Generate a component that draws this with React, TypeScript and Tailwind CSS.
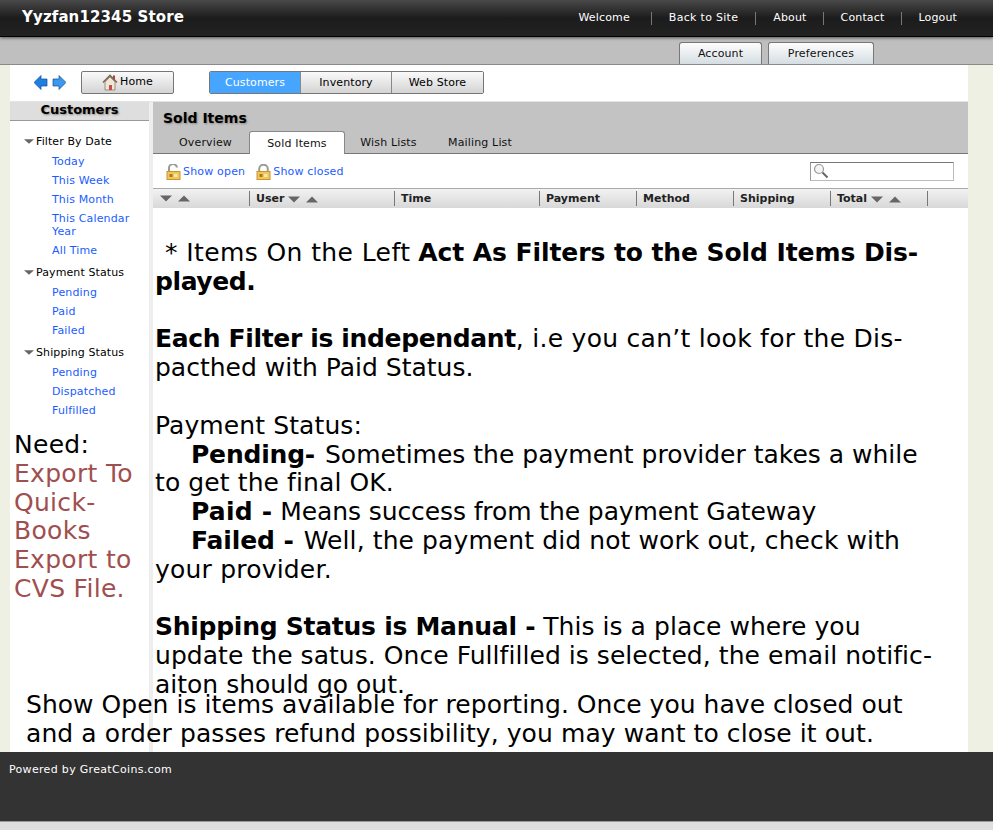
import React from "react";

const font = "font-['DejaVu_Sans',Verdana,sans-serif]";

function Tri({ up, small, className }: { up?: boolean; small?: boolean; className?: string }) {
  return (
    <svg width={small ? 10 : 12} height={small ? 5 : 7} viewBox="0 0 12 7" preserveAspectRatio="none" className={className}>
      <path d={up ? "M6 0.5L12 6.5H0Z" : "M0 0.5H12L6 6.5Z"} fill="#666" />
    </svg>
  );
}

function Lock({ open }: { open?: boolean }) {
  return (
    <svg width="15" height="16" viewBox="0 0 15 16">
      <path d={open ? "M3 8V4.5a4 4 0 0 1 8-1" : "M3.2 8V5a4.3 4.3 0 0 1 8.6 0v3"} fill="none" stroke="#9a9a9a" strokeWidth="2" />
      <rect x="1" y="7.5" width="13" height="8" fill="#f2c65a" stroke="#c9962c" />
      <rect x="3.5" y="10" width="3" height="3" fill="#a87a1c" />
      <rect x="8" y="10" width="3.5" height="3" fill="#fbe9a8" />
    </svg>
  );
}

function Group({ title, links }: { title: string; links: string[] }) {
  return (
    <div className="mb-[4px]">
      <div className="flex items-center h-[19px] pl-[14px] text-[11px] tracking-[0.1px] text-black">
        <Tri small className="mr-[2px] mb-[3px]" />
        <span>{title}</span>
      </div>
      <div className="pl-[42px] text-[11px] leading-[13px] tracking-[0.15px] text-[#1a5cff]">
        {links.map(l => (
          <div key={l} className="py-[3px] pr-2">
            {l}
          </div>
        ))}
      </div>
    </div>
  );
}

const columns = [
  { label: "User", w: "w-[145px]", arrows: true },
  { label: "Time", w: "w-[145px]" },
  { label: "Payment", w: "w-[97px]" },
  { label: "Method", w: "w-[97px]" },
  { label: "Shipping", w: "w-[97px]" },
  { label: "Total", w: "w-[97px]", arrows: true },
];

export default function App() {
  return (
    <div className={`${font} relative w-[993px] h-[830px] overflow-hidden bg-[#eef0e4]`}>
      {/* top bar */}
      <div className="relative z-10 h-[37px] flex items-center justify-between border-b border-black bg-gradient-to-b from-[#4a4a4a] via-[#1c1c1c] to-[#222] text-white shadow-[0_1px_3px_#555]">
        <div className="pl-[22px] pb-[2px] text-[15px] font-bold tracking-[0.12px]">Yyzfan12345 Store</div>
        <div className="flex items-center text-[11px] tracking-[0.15px] pr-[36px]">
          <span>Welcome</span>
          <span className="h-[13px] w-px bg-[#777] ml-[21px] mr-[17px]" />
          <span className="tracking-[0.3px]">Back to Site</span>
          <span className="h-[13px] w-px bg-[#777] mx-[17px]" />
          <span>About</span>
          <span className="h-[13px] w-px bg-[#777] ml-[16px] mr-[17px]" />
          <span>Contact</span>
          <span className="h-[13px] w-px bg-[#777] ml-[17px] mr-[16px]" />
          <span>Logout</span>
        </div>
      </div>

      {/* sub bar */}
      <div className="h-[28px] flex justify-end items-end gap-[6px] pr-[119px] bg-[#bfbfbf] border-b border-[#8a8a8a]">
        <div className="h-[22px] w-[83px] pt-[2px] flex items-center justify-center rounded-t-[3px] border border-b-0 border-[#777] bg-gradient-to-b from-[#fdfdfd] to-[#d5dde2] text-[11px] tracking-[0.1px] text-[#111]">
          Account
        </div>
        <div className="h-[22px] w-[106px] pt-[2px] flex items-center justify-center rounded-t-[3px] border border-b-0 border-[#777] bg-gradient-to-b from-[#fdfdfd] to-[#d5dde2] text-[11px] tracking-[0.15px] text-[#111]">
          Preferences
        </div>
      </div>

      {/* page */}
      <div className="relative ml-[10px] w-[958px] h-[687px] bg-white overflow-hidden">
        {/* toolbar */}
        <div className="h-[37px] flex items-start pt-[6px] pl-[24px] border-b border-[#e4e4e4]">
          <svg width="32" height="15" viewBox="0 0 32 15" className="mt-[4px]">
            <path d="M0 7.5L7 0.5V4H13V11H7V14.5Z" fill="#1f7fe0" stroke="#0b4f9e" strokeWidth="0.7" />
            <path d="M32 7.5L25 0.5V4H19V11H25V14.5Z" fill="#3d97ea" stroke="#0b4f9e" strokeWidth="0.7" />
          </svg>
          <div className="ml-[15px] h-[23px] w-[93px] flex items-center justify-center gap-[2px] rounded-[2px] border border-[#777] bg-gradient-to-b from-[#fafafa] to-[#d4d4d4] text-[11px] tracking-[0.1px] text-black">
            <svg width="16" height="17" viewBox="0 0 16 17">
              <path d="M1 8.5L8 1.5L15 8.5" fill="none" stroke="#7a6a55" strokeWidth="1.6" />
              <path d="M3 8V16H13V8L8 3Z" fill="#efe6d6" stroke="#8a7a66" strokeWidth="0.8" />
              <rect x="11" y="1.5" width="2" height="4" fill="#a5483f" />
              <rect x="7" y="11" width="3" height="5" fill="#c0504d" />
            </svg>
            Home
          </div>
          <div className="ml-[35px] flex h-[23px] text-[11px] tracking-[0.1px] rounded-[2px] border border-[#777] overflow-hidden">
            <div className="w-[90px] pt-px flex items-center justify-center bg-[#45a5ff] text-white">Customers</div>
            <div className="w-[91px] pt-px flex items-center justify-center border-l border-[#888] bg-gradient-to-b from-[#fafafa] to-[#d4d4d4] text-black">
              Inventory
            </div>
            <div className="w-[92px] pt-px flex items-center justify-center border-l border-[#888] bg-gradient-to-b from-[#fafafa] to-[#d4d4d4] text-black">
              Web Store
            </div>
          </div>
        </div>

        <div className="flex h-[650px]">
          {/* sidebar */}
          <div className="w-[139px] shrink-0">
            <div className="h-[19px] bg-[#dedede] border-b border-[#999] text-center text-[13px] font-bold leading-[16px] text-black [text-shadow:1px_1px_2px_#888]">
              Customers
            </div>
            <div className="pt-[12px]">
              <Group title="Filter By Date" links={["Today", "This Week", "This Month", "This Calendar Year", "All Time"]} />
              <Group title="Payment Status" links={["Pending", "Paid", "Failed"]} />
              <Group title="Shipping Status" links={["Pending", "Dispatched", "Fulfilled"]} />
            </div>
            <div className="pl-[4px] pt-[7px] text-[25px] leading-[28.8px] tracking-[0.3px]">
              <div className="text-black">Need:</div>
              <div className="text-[#a04f4f]">
                Export To
                <br />
                Quick-
                <br />
                Books
                <br />
                Export to
                <br />
                CVS File.
              </div>
            </div>
          </div>

          <div className="w-[4px] shrink-0 bg-[#eeeeee]" />

          {/* main column */}
          <div className="flex-1 min-w-0">
            <div className="h-[52px] bg-[#c3c3c3] border-b border-[#777] relative">
              <div className="pl-[10px] pt-[7px] text-[14px] font-bold leading-[18px] text-black [text-shadow:1px_1px_2px_#888]">
                Sold Items
              </div>
              <div className="absolute left-[9px] bottom-[-1px] flex text-[11px] tracking-[0.15px] text-[#111]">
                <div className="w-[87px] h-[22px] pt-[2px] flex items-center justify-center">Overview</div>
                <div className="w-[96px] h-[23px] pt-[2px] flex items-center justify-center rounded-t-[3px] border border-b-0 border-[#888] bg-white">
                  Sold Items
                </div>
                <div className="w-[87px] h-[22px] pt-[2px] flex items-center justify-center">Wish Lists</div>
                <div className="w-[96px] h-[22px] pt-[2px] flex items-center justify-center">Mailing List</div>
              </div>
            </div>

            <div className="h-[34px] flex items-center pt-[2px] pl-[13px] pr-[14px] text-[11px] tracking-[0.18px] text-[#1a5cff]">
              <Lock open />
              <span className="ml-[2px]">Show open</span>
              <span className="ml-[11px]">
                <Lock />
              </span>
              <span className="ml-[2px]">Show closed</span>
              <div className="ml-auto mb-[2px] h-[19px] w-[144px] flex items-center pl-[2px] border border-[#bbb] border-t-[#777] border-l-[#999]">
                <svg width="16" height="16" viewBox="0 0 16 16">
                  <circle cx="6" cy="6" r="4.5" fill="#f4f4f4" stroke="#999" strokeWidth="1.2" />
                  <path d="M9.5 9.5L14.5 14.5" stroke="#666" strokeWidth="2" />
                </svg>
              </div>
            </div>

            <div className="h-[20px] flex items-center border-t border-[#aaa] bg-gradient-to-b from-[#f2f2f2] to-[#d8d8d8] text-[11px] font-bold text-[#222]">
              <div className="w-[96px] h-[15px] flex items-center gap-[6px] pl-[7px]">
                <Tri />
                <Tri up />
              </div>
              {columns.map(c => (
                <div key={c.label} className={`${c.w} h-[15px] pt-px flex items-center gap-[4px] pl-[6px] border-l border-[#777]`}>
                  {c.label}
                  {c.arrows && (
                    <>
                      <Tri />
                      <Tri up className="ml-[2px]" />
                    </>
                  )}
                </div>
              ))}
              <div className="h-[15px] border-l border-[#777]" />
            </div>

            <div className="pl-[2px] pt-[31px] text-[25px] leading-[28.8px] text-black whitespace-nowrap">
              <div className="pl-[2px]">
                &nbsp;<span className="tracking-[0.4px]">* Items On the Left</span>{" "}
                <b className="tracking-[-0.08px]">Act As Filters to the Sold Items Dis-</b>
              </div>
              <div>
                <b className="tracking-[-0.4px]">played.</b>
              </div>
              <div className="mt-[28.8px]">
                <b className="tracking-[-0.35px]">Each Filter is independant</b>
                <span className="tracking-[0.27px]">, i.e you can’t look for the Dis-</span>
              </div>
              <div>pacthed with Paid Status.</div>
              <div className="mt-[28.8px] tracking-[0.1px]">Payment Status:</div>
              <div className="pl-[36px]">
                <b className="tracking-[-0.2px] mr-[2px]">Pending-</b> Sometimes the payment provider takes a while
              </div>
              <div className="tracking-[0.1px]">to get the final OK.</div>
              <div className="pl-[36px]">
                <b className="tracking-[0.2px]">Paid -</b> <span className="tracking-[-0.1px]">Means success from the payment Gateway</span>
              </div>
              <div className="pl-[36px]">
                <b className="tracking-[-0.1px] mr-[2px]">Failed -</b> <span className="tracking-[0.1px]">Well, the payment did not work out, check with</span>
              </div>
              <div className="tracking-[0.2px]">your provider.</div>
              <div className="mt-[28.8px]">
                <b className="tracking-[-0.26px]">Shipping Status is Manual -</b> <span className="tracking-[0.05px]">This is a place where you</span>
              </div>
              <div className="tracking-[0.05px]">update the satus. Once Fullfilled is selected, the email notific-</div>
              <div>aiton should go out.</div>
            </div>
          </div>
        </div>

        {/* note pasted over the page */}
        <div className="absolute left-[16px] top-[626px] text-[25px] leading-[28.8px] text-black whitespace-nowrap">
          <span className="tracking-[0.03px]">Show Open is items available for reporting. Once you have closed out</span>
          <br />
          <span className="tracking-[0.09px]">and a order passes refund possibility, you may want to close it out.</span>
        </div>
      </div>

      {/* footer */}
      <div className="h-[70px] bg-[#333] border-b border-[#999] pl-[9px] pt-[11px] text-[11px] leading-[14px] tracking-[0.32px] text-white">
        Powered by GreatCoins.com
      </div>
      <div className="h-[8px] bg-[#dedede]" />
    </div>
  );
}
